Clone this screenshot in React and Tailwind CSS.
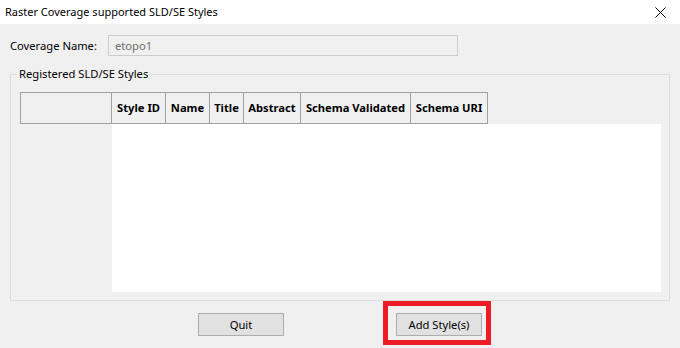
import React from 'react';

const columns = [
  { label: 'Style ID', w: 'w-[54px]' },
  { label: 'Name', w: 'w-[44px]' },
  { label: 'Title', w: 'w-[34px]' },
  { label: 'Abstract', w: 'w-[57px]' },
  { label: 'Schema Validated', w: 'w-[110px]' },
  { label: 'Schema URI', w: 'w-[77px]' },
];

export default function App() {
  return (
    <div className="w-[680px] h-[348px] flex flex-col bg-[#f0f0f0] text-[11.2px] leading-[16px] text-black overflow-hidden" style={{ fontFamily: '"Noto Sans", "Liberation Sans", sans-serif' }}>
      {/* Title bar */}
      <div className="h-[24px] bg-white flex items-center justify-between pl-[5px] pr-[10px] shrink-0 text-[11px]">
        <span>Raster Coverage supported SLD/SE Styles</span>
        <svg width="11" height="11" viewBox="0 0 11 11" className="mr-[4px]">
          <path d="M0.5 0.5 L10.5 10.5 M10.5 0.5 L0.5 10.5" stroke="#000" strokeWidth="1" />
        </svg>
      </div>

      {/* Coverage name */}
      <div className="flex items-center mt-[11px] pl-[10px] h-[21px] shrink-0">
        <span className="w-[98px]">Coverage Name:</span>
        <div className="w-[350px] h-[21px] border border-[#cccccc] bg-[#f0f0f0] text-[#6d6d6d] pl-[6px] flex items-center">
          etopo1
        </div>
      </div>

      {/* Group box */}
      <fieldset className="mt-[10px] mx-[10px] w-[660px] border border-[#dcdcdc] px-[6px] pb-[8px] shrink-0">
        <legend className="px-[2px]">Registered SLD/SE Styles</legend>
        <div className="mt-[10px] ml-[3px] mr-[2px]">
          <div className="flex h-[32px] border-y border-l border-[#a0a0a0] w-max font-bold">
            <div className="w-[91px] border-r border-[#a0a0a0]"></div>
            {columns.map(c => (
              <div key={c.label} className={`${c.w} border-r border-[#a0a0a0] flex items-center justify-center whitespace-nowrap`}>
                {c.label}
              </div>
            ))}
          </div>
          <div className="flex h-[168px]">
            <div className="w-[92px]"></div>
            <div className="flex-1 bg-white"></div>
          </div>
        </div>
      </fieldset>

      {/* Buttons */}
      <div className="flex items-start pl-[198px]">
        <button className="mt-[12px] w-[86px] h-[23px] border border-[#adadad] bg-[#e1e1e1] flex items-center justify-center">
          Quit
        </button>
        <div className="ml-[99px] border-[5px] border-[#ed1c24] pl-[8px] pr-[4px] pt-[7px] pb-[4px]">
          <button className="w-[86px] h-[23px] border border-[#adadad] bg-[#e1e1e1] flex items-center justify-center">
            Add Style(s)
          </button>
        </div>
      </div>
    </div>
  );
}
